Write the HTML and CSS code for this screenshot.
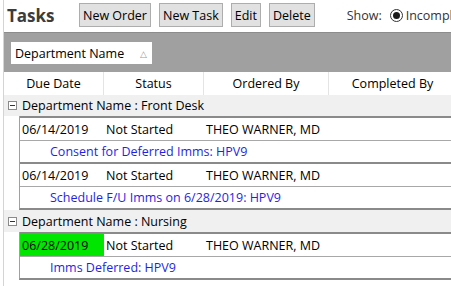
FILE: index.html
```html
<!DOCTYPE html>
<html lang="en">
<head>
    <meta charset="UTF-8">
    <title>Tasks</title>
    <link rel="stylesheet" href="styles.css">
</head>
<body>

<div class="page">
    <div class="toolbar">
        <h1 class="title">Tasks</h1>
        <button class="btn">New Order</button>
        <button class="btn">New Task</button>
        <button class="btn">Edit</button>
        <button class="btn">Delete</button>
        <div class="show">
            Show:
            <span class="radio"><span class="dot"></span></span>
            Incomplete
        </div>
    </div>

    <div class="grid">
        <div class="group-panel">
            <span class="chip">Department Name <span class="sort">&#9651;</span></span>
        </div>

        <div class="header-row">
            <div class="hcell c-due">Due Date</div>
            <div class="hcell c-status">Status</div>
            <div class="hcell c-ordered">Ordered By</div>
            <div class="hcell c-completed">Completed By</div>
        </div>

        <div class="group">
            <div class="group-row"><span class="toggle"></span>Department Name : Front Desk</div>
            <div class="records">
                <div class="record">
                    <div class="data-row">
                        <div class="cell d-due">06/14/2019</div>
                        <div class="cell d-status">Not Started</div>
                        <div class="cell d-ordered">THEO WARNER, MD</div>
                    </div>
                    <div class="preview">Consent for Deferred Imms: HPV9</div>
                </div>
                <div class="record">
                    <div class="data-row">
                        <div class="cell d-due">06/14/2019</div>
                        <div class="cell d-status">Not Started</div>
                        <div class="cell d-ordered">THEO WARNER, MD</div>
                    </div>
                    <div class="preview">Schedule F/U Imms on 6/28/2019: HPV9</div>
                </div>
            </div>
        </div>

        <div class="group">
            <div class="group-row"><span class="toggle"></span>Department Name : Nursing</div>
            <div class="records">
                <div class="record">
                    <div class="data-row">
                        <div class="cell d-due overdue">06/28/2019</div>
                        <div class="cell d-status">Not Started</div>
                        <div class="cell d-ordered">THEO WARNER, MD</div>
                    </div>
                    <div class="preview">Imms Deferred: HPV9</div>
                </div>
            </div>
        </div>
    </div>
</div>

</body>
</html>
```

FILE: styles.css
```css
* {
    box-sizing: border-box;
}

body {
    margin: 0;
    padding-left: 3px;
    background: #ffffff;
    font-family: 'Open Sans', sans-serif;
    font-size: 12.5px;
    color: #000000;
    overflow: hidden;
}

.page {
    border-left: 1px solid #d4d4d4;
    height: 100vh;
    width: 600px;
}

.toolbar {
    display: flex;
    align-items: flex-start;
    height: 32px;
}

.title {
    margin: 0;
    width: 75px;
    padding: 3px 0 0 3px;
    font-size: 17px;
    line-height: 26px;
    font-weight: bold;
    color: #3c3c3c;
}

.btn {
    height: 24px;
    margin: 3px 8px 0 0;
    padding: 0 3px;
    border: 1px solid #adadad;
    background: #e1e1e1;
    font-family: inherit;
    font-size: 12.5px;
    color: #000000;
}

.show {
    display: flex;
    align-items: center;
    gap: 3px;
    height: 24px;
    margin: 3px 0 0 24px;
    color: #333333;
    white-space: nowrap;
}

.radio {
    display: inline-flex;
    align-items: center;
    justify-content: center;
    width: 13px;
    height: 13px;
    margin-left: 5px;
    border: 1px solid #333333;
    border-radius: 50%;
}

.dot {
    width: 7px;
    height: 7px;
    border-radius: 50%;
    background: #1a1a1a;
}

.grid {
    width: 560px;
}

.group-panel {
    height: 40px;
    padding: 9px 7px 0;
    border-top: 1px solid #8c8c8c;
    background: #a0a0a0;
}

.chip {
    display: flex;
    align-items: center;
    justify-content: space-between;
    width: 141px;
    height: 22px;
    padding: 0 5px 0 4px;
    background: #ffffff;
}

.sort {
    font-size: 9px;
    color: #9a9a9a;
}

.header-row {
    display: flex;
    height: 23px;
    background: #ffffff;
}

.hcell {
    border-right: 1px solid #e4e4e4;
    text-align: center;
    line-height: 23px;
}

.c-due { width: 100px; }
.c-status { width: 100px; }
.c-ordered { width: 125px; }
.c-completed { width: 128px; }

.group-row {
    display: flex;
    align-items: center;
    height: 21px;
    padding-left: 4px;
    background: #f0f0f0;
}

.toggle {
    position: relative;
    width: 9px;
    height: 9px;
    margin-right: 5px;
    border: 1px solid #8a8a8a;
    background: #ffffff;
}

.toggle::after {
    content: '';
    position: absolute;
    left: 1px;
    top: 3px;
    width: 5px;
    height: 1px;
    background: #333333;
}

.group + .group .group-row {
    height: 22px;
}

.records {
    margin-left: 15px;
    border-left: 1px solid #a0a0a0;
    border-bottom: 2px solid #8a8a8a;
    background: #ffffff;
}

.record {
    border-top: 2px solid #8a8a8a;
}

.data-row {
    display: flex;
    height: 23px;
    border-bottom: 1px solid #a8a8a8;
}

.cell {
    padding-left: 2px;
    line-height: 23px;
    white-space: nowrap;
}

.d-due { width: 84px; }
.d-status { width: 100px; }
.d-ordered { width: 125px; }

.overdue {
    background: #00e600;
}

.preview {
    height: 21px;
    padding-left: 30px;
    line-height: 21px;
    color: #1f1fe6;
}
```
